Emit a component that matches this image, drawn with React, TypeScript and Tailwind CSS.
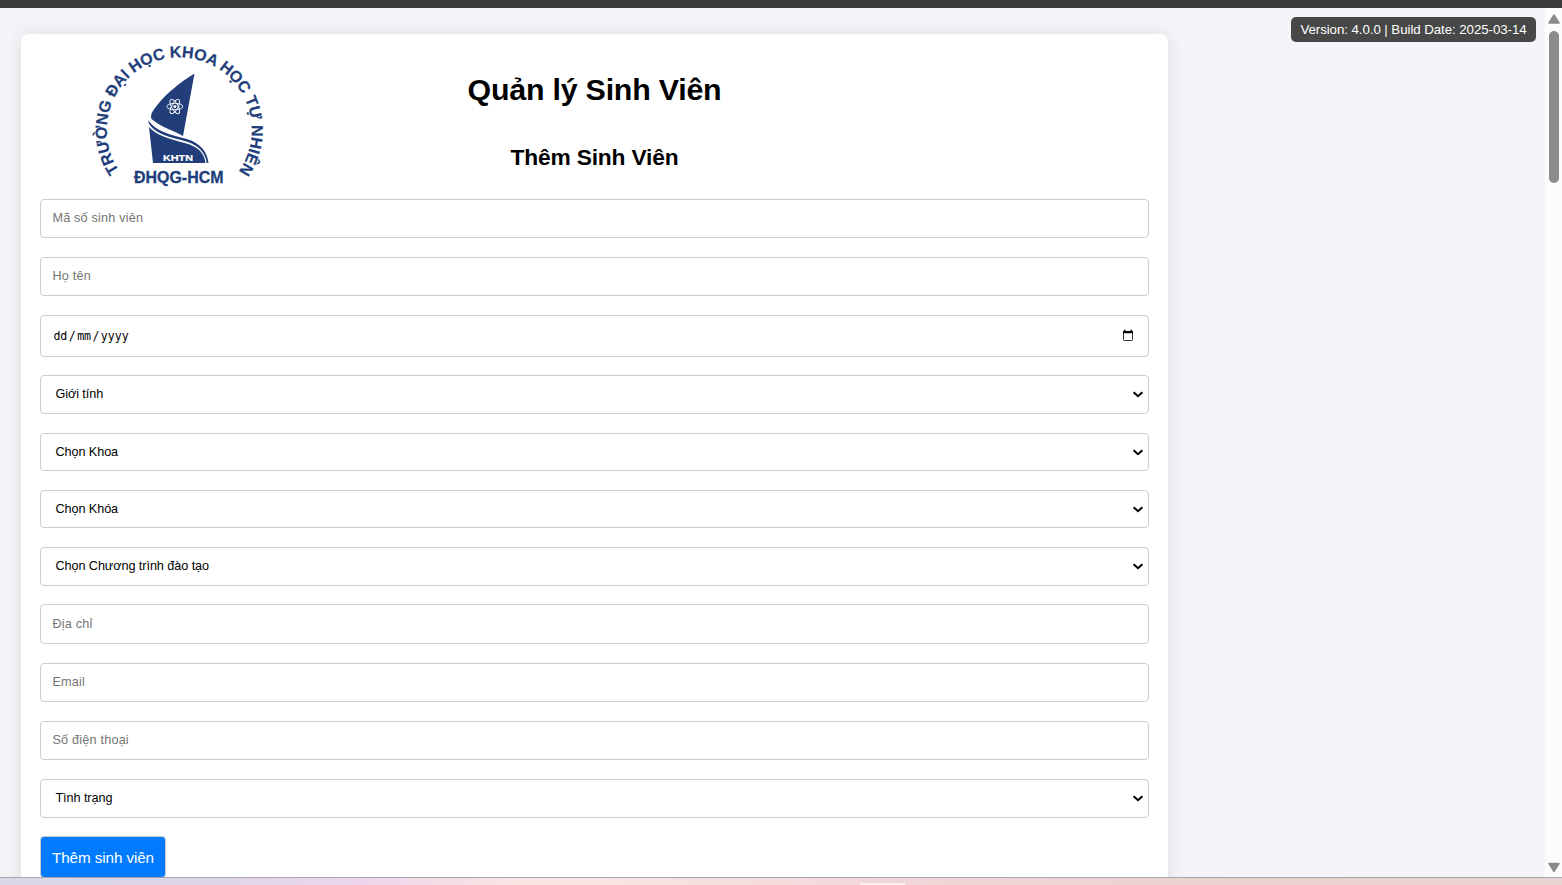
import React from "react";

const field =
  "block w-full shrink-0 rounded-[4px] border border-[#ccc] bg-white px-[11.4px] text-black";

function TextField({ placeholder, size }: { placeholder: string; size: string }) {
  return (
    <input
      type="text"
      placeholder={placeholder}
      className={`${field} ${size} text-[12.67px] tracking-[0.2px] outline-none placeholder:text-[#757575] placeholder:opacity-100`}
    />
  );
}

function SelectField({ label, size }: { label: string; size: string }) {
  return (
    <button type="button" className={`${field} ${size} text-left text-[12.67px] tracking-[-0.07px]`}>
      <span className="flex items-center justify-between pl-[3px]">
        <span>{label}</span>
        <svg className="-mr-[7px] h-[7px] w-[12px]" viewBox="0 0 12 7" fill="none">
          <path d="M1.6 1.2 L6 5.2 L10.4 1.2" stroke="#000" strokeWidth="2" />
        </svg>
      </span>
    </button>
  );
}

function DateField() {
  return (
    <div className={`${field} mb-[18px] flex h-[42px] items-center justify-between`}>
      <div className="flex items-center pt-[2px] pl-[1px] font-['DejaVu_Sans_Mono',monospace] text-[11.6px] leading-none">
        <span>dd</span>
        <span className="px-[1.4px]">/</span>
        <span>mm</span>
        <span className="px-[1.4px]">/</span>
        <span>yyyy</span>
      </div>
      <svg className="mr-[3px] mb-[2px] h-[12px] w-[12px]" viewBox="0 0 12 12">
        <rect x="1.5" y="2.5" width="9" height="9" rx="0.7" fill="none" stroke="#333" strokeWidth="1" />
        <path d="M1 2H11V4.300H1ZM2 0.8H3.5V2H2ZM8.5 0.8H10V2H8.5Z" fill="#000" />
      </svg>
    </div>
  );
}

function Logo() {
  return (
    <svg className="h-[152px] w-[190px]" viewBox="84 38 190 152" fill="#213e7b">
      <defs>
        <path id="ring" d="M121.2 173.400 A72.5 72.5 0 1 1 238 172.400" />
      </defs>
      <g fontFamily="Liberation Sans, Arial, sans-serif" fontWeight="700">
        <text fontSize="16" stroke="#213e7b" strokeWidth="0.2">
          <textPath href="#ring" startOffset="3" textLength="315.5" lengthAdjust="spacing">
            TRƯỜNG ĐẠI HỌC KHOA HỌC TỰ NHIÊN
          </textPath>
        </text>
        <text
          x="134"
          y="183"
          fontSize="16"
          textLength="89.5"
          lengthAdjust="spacingAndGlyphs"
          stroke="#213e7b"
          strokeWidth="0.3"
        >
          ĐHQG-HCM
        </text>
      </g>
      <path d="M194.5 73.5 L183 136 C175 131 162 128 151.5 119 C150.5 117 151 113.500 153.500 110 C164 95 179 83 194.500 73.500Z" />
      <path d="M148.300 120.500 C156 131 169 134.500 181 137.500 C197 140.500 207 149 208.500 163 L206.800 163 C205 150 196 143.500 181 140 C168 136.500 155 134 148.500 123Z" />
      <path d="M149 127 C157 136 168 138 179 141.500 C195 145 204 150 205.500 163 L153 163Z" />
      <g fill="none" stroke="#fff" strokeWidth="0.9">
        <ellipse cx="174.800" cy="106.500" rx="8" ry="3.200" transform="rotate(0 174.800 106.500)" />
        <ellipse cx="174.800" cy="106.500" rx="8" ry="3.200" transform="rotate(60 174.800 106.500)" />
        <ellipse cx="174.800" cy="106.500" rx="8" ry="3.200" transform="rotate(120 174.800 106.500)" />
      </g>
      <circle cx="174.800" cy="106.500" r="1.500" fill="#fff" />
      <text
        x="163"
        y="160.600"
        fill="#fff"
        stroke="#fff"
        strokeWidth="0.2"
        fontFamily="Liberation Sans, Arial, sans-serif"
        fontWeight="700"
        fontSize="9.800"
        textLength="30"
        lengthAdjust="spacingAndGlyphs"
      >
        KHTN
      </text>
    </svg>
  );
}

function Scrollbar() {
  return (
    <div className="flex w-[17px] shrink-0 flex-col items-center bg-[#fcfcfc] pt-[6px] pb-[4px]">
      <svg className="ml-[1px] h-[10px] w-[12px] shrink-0" viewBox="0 0 12 10">
        <path d="M6 1 L11 9 H1Z" fill="#8b8b8b" stroke="#8b8b8b" strokeWidth="1.500" strokeLinejoin="round" />
      </svg>
      <div className="mt-[7px] ml-[1px] h-[152px] w-[10px] shrink-0 rounded-full bg-[#8b8b8b]" />
      <div className="grow" />
      <svg className="ml-[1px] h-[11px] w-[12px] shrink-0" viewBox="0 0 12 11">
        <path d="M1 1.500 H11 L6 9.500Z" fill="#8b8b8b" stroke="#8b8b8b" strokeWidth="1.500" strokeLinejoin="round" />
      </svg>
    </div>
  );
}

export default function App() {
  return (
    <div className="flex h-[885px] w-full flex-col overflow-hidden bg-[#f4f4f9] font-['Liberation_Sans',Arial,sans-serif] text-black">
      <div className="h-[8px] shrink-0 bg-[#3b3b3b]" />
      <div className="flex h-[869px] shrink-0 overflow-hidden">
        <main className="flex h-[869px] grow items-start justify-between overflow-hidden pt-[9px] pr-[9px] pl-[21px]">
          <div className="mt-[17px] flex h-[900px] w-[1147px] shrink-0 flex-col rounded-[8px] bg-white px-[19px] shadow-[0_0_19px_rgba(0,0,0,0.1)]">
            <header className="grid h-[165px] shrink-0 grid-cols-[270px_1fr_270px]">
              <div className="pt-[4px] pl-[44px]">
                <Logo />
              </div>
              <div className="text-center font-bold">
                <h1 className="pt-[37px] text-[30.4px] leading-[36px] tracking-[-0.23px]">Quản lý Sinh Viên</h1>
                <h2 className="pt-[37px] text-[22.8px] leading-[26px] tracking-[-0.2px]">Thêm Sinh Viên</h2>
              </div>
            </header>
            <form className="flex flex-col items-stretch">
              <TextField placeholder="Mã số sinh viên" size="h-[39px] mb-[19px] pb-[2px]" />
              <TextField placeholder="Họ tên" size="h-[39px] mb-[19px] pb-[2px]" />
              <DateField />
              <SelectField label="Giới tính" size="h-[39px] mb-[19px]" />
              <SelectField label="Chọn Khoa" size="h-[38px] mb-[19px]" />
              <SelectField label="Chọn Khóa" size="h-[38px] mb-[19px]" />
              <SelectField label="Chọn Chương trình đào tạo" size="h-[39px] mb-[18px]" />
              <TextField placeholder="Địa chỉ" size="h-[40px] mb-[19px]" />
              <TextField placeholder="Email" size="h-[39px] mb-[19px] pb-[2px]" />
              <TextField placeholder="Số điện thoại" size="h-[39px] mb-[19px] pb-[2px]" />
              <SelectField label="Tình trạng" size="h-[39px] mb-[18px]" />
              <button
                type="button"
                className="h-[42px] w-[126px] rounded-[4px] border border-[#ccc] bg-[#007bff] pt-[2px] text-[15.2px] tracking-[-0.07px] whitespace-nowrap text-white"
              >
                Thêm sinh viên
              </button>
            </form>
          </div>
          <div className="flex h-[25px] w-[245px] items-center justify-center rounded-[5px] bg-[#484848] text-[13.3px] tracking-[-0.07px] whitespace-nowrap text-white">
            Version: 4.0.0 | Build Date: 2025-03-14
          </div>
        </main>
        <Scrollbar />
      </div>
      <div className="flex h-[8px] shrink-0 justify-center border-t border-[#aaa5ac] bg-[linear-gradient(90deg,#dcd8e8_0%,#dcd6e8_12%,#edd6ec_23%,#f9e5e3_33%,#f8e3e1_42%,#f2d6d9_57%,#ead3ce_80%,#ead3d3_100%)]">
        <div className="mt-[5px] ml-[203px] h-[2px] w-[46px] rounded-t-[3px] bg-[#faf0f0]" />
      </div>
    </div>
  );
}
